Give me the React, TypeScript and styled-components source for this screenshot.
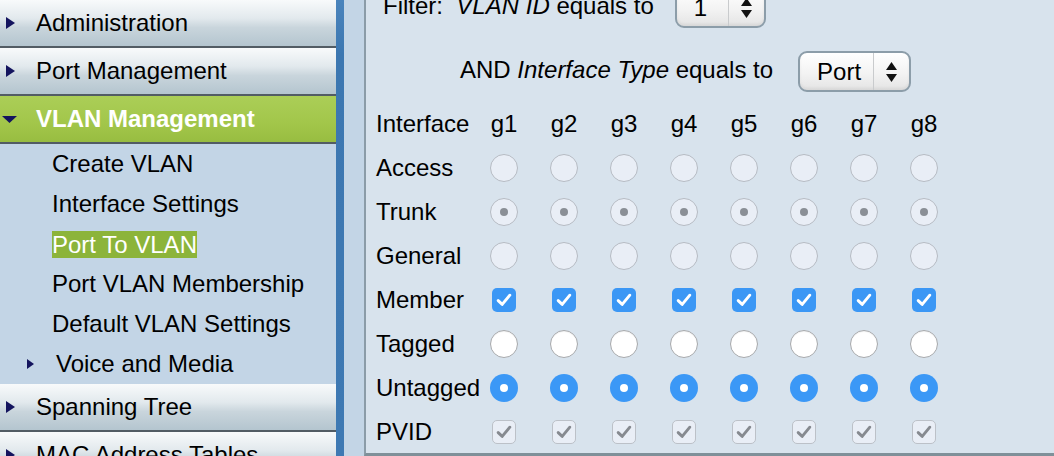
import React from 'react';
import styled, { createGlobalStyle } from 'styled-components';

const GlobalStyle = createGlobalStyle`
  html, body {
    margin: 0;
    padding: 0;
    overflow: hidden;
    background: #c3d5e6;
  }
  body {
    font-family: 'Liberation Sans', Arial, sans-serif;
    color: #000;
  }
`;

const Page = styled.div`
  display: flex;
  width: 1054px;
  height: 456px;
  overflow: hidden;
`;

const Sidebar = styled.nav`
  width: 336px;
  flex-shrink: 0;
  background: #c3d5e6;
  display: flex;
  flex-direction: column;
`;

const NavItem = styled.div<{ $active?: boolean }>`
  height: 46px;
  flex-shrink: 0;
  display: flex;
  align-items: center;
  border-bottom: 2px solid #525c64;
  font-size: 24px;
  font-weight: ${p => (p.$active ? 700 : 400)};
  color: ${p => (p.$active ? '#fff' : '#000')};
  background: ${p =>
    p.$active
      ? 'linear-gradient(#abce57, #a2c64a 60%, #98bd41)'
      : 'linear-gradient(#f8fafb 0%, #e2e9ed 40%, #c9d5dc 60%, #b4c5cf 100%)'};
`;

const ArrowSlot = styled.span<{ $open?: boolean }>`
  width: 36px;
  flex-shrink: 0;
  display: flex;
  align-items: center;
  padding-left: ${p => (p.$open ? '2px' : '6px')};
  box-sizing: border-box;
`;

const SubMenu = styled.div`
  display: flex;
  flex-direction: column;
  flex-shrink: 0;
  background: #c3d5e6;
`;

const SubItem = styled.div<{ $nested?: boolean }>`
  height: 40px;
  line-height: 40px;
  font-size: 24px;
  display: flex;
  align-items: center;
  padding-left: ${p => (p.$nested ? '27px' : '52px')};
`;

const SubArrow = styled.span`
  width: 29px;
  display: flex;
  align-items: center;
`;

const Current = styled.span`
  background: #8cb43a;
  color: #fff;
  line-height: 27px;
  display: inline-block;
`;

const BlueBar = styled.div`
  width: 8px;
  flex-shrink: 0;
  background: linear-gradient(#4a84bc, #3c77b1 12%, #3e79b3);
`;

const Gutter = styled.div`
  width: 20px;
  flex-shrink: 0;
  background: #c3d5e6;
`;

const Main = styled.main`
  flex: 1;
  box-sizing: border-box;
  height: 456px;
  background: #d8e3ed;
  border-left: 2px solid #8b9ca8;
  border-bottom: 3px solid #7f9099;
  overflow: hidden;
  font-size: 24px;
`;

const FilterRow = styled.div<{ $indent: number; $top: number }>`
  display: flex;
  align-items: center;
  height: 41px;
  margin-top: ${p => p.$top}px;
  padding-left: ${p => p.$indent}px;
  white-space: pre;
`;

const Label = styled.span<{ $gap: number }>`
  margin-right: ${p => p.$gap}px;
  padding-bottom: 4px;
`;

const Select = styled.div<{ $width: number }>`
  width: ${p => p.$width}px;
  height: 41px;
  box-sizing: border-box;
  border: 2px solid #8c9da9;
  border-radius: 9px;
  background: linear-gradient(#ffffff, #f3f3f3 55%, #e4e4e4);
  box-shadow: inset 0 -2px 3px rgba(0, 0, 0, 0.06);
  display: flex;
  align-items: stretch;
`;

const SelectValue = styled.span`
  flex: 1;
  display: flex;
  align-items: center;
  padding-left: 17px;
`;

const SelectArrows = styled.span`
  width: 35px;
  border-left: 1px solid #c9cbcd;
  display: flex;
  align-items: center;
  justify-content: center;
`;

const Grid = styled.div`
  display: grid;
  grid-template-columns: 98px repeat(8, 60px);
  grid-auto-rows: 44px;
  align-items: center;
  justify-items: center;
  margin: 10px 0 0 10px;
`;

const RowLabel = styled.span`
  justify-self: start;
  white-space: nowrap;
`;

const Radio = styled.span<{ $variant: 'disabled' | 'disabledOn' | 'off' | 'on' }>`
  width: 28px;
  height: 28px;
  box-sizing: border-box;
  border-radius: 50%;
  display: flex;
  align-items: center;
  justify-content: center;
  border: ${p =>
    p.$variant === 'on'
      ? 'none'
      : p.$variant === 'off'
      ? '1px solid #a7a9ac'
      : '1px solid #b6bbc3'};
  background: ${p =>
    p.$variant === 'on' ? '#3b98f6' : p.$variant === 'off' ? '#fff' : '#e9eef6'};
  box-shadow: ${p =>
    p.$variant === 'off' ? 'inset 0 1px 1px rgba(0,0,0,0.06)' : 'none'};

  &::after {
    content: '';
    display: ${p => (p.$variant === 'on' || p.$variant === 'disabledOn' ? 'block' : 'none')};
    width: 8px;
    height: 8px;
    border-radius: 50%;
    background: ${p => (p.$variant === 'on' ? '#fff' : '#8a8f96')};
  }
`;

const Check = styled.span<{ $disabled?: boolean }>`
  width: 24px;
  height: 24px;
  box-sizing: border-box;
  border-radius: 5px;
  display: flex;
  align-items: center;
  justify-content: center;
  background: ${p => (p.$disabled ? '#e9eef6' : '#3b97f5')};
  border: ${p => (p.$disabled ? '1px solid #bcc1c8' : 'none')};

  svg {
    display: block;
  }
`;

const RightArrow = ({ w = 9, h = 12 }: { w?: number; h?: number }) => (
  <svg width={w} height={h} viewBox={`0 0 ${w} ${h}`}>
    <path d={`M0 0 L${w} ${h / 2} L0 ${h} Z`} fill="#14145e" />
  </svg>
);

const DownArrow = () => (
  <svg width="15" height="7" viewBox="0 0 15 7">
    <path d="M0 0 L15 0 L7.5 7 Z" fill="#14145e" />
  </svg>
);

const UpDown = () => (
  <svg width="11" height="20" viewBox="0 0 11 20">
    <path d="M5.5 0 L11 8 L0 8 Z" fill="#111" />
    <path d="M0 12 L11 12 L5.5 20 Z" fill="#111" />
  </svg>
);

const Tick = ({ color }: { color: string }) => (
  <svg width="18" height="18" viewBox="0 0 18 18">
    <path
      d="M3.2 9.6 L7.2 13.4 L14.8 4.2"
      fill="none"
      stroke={color}
      strokeWidth="2.9"
      strokeLinecap="round"
      strokeLinejoin="round"
    />
  </svg>
);

const ports = ['g1', 'g2', 'g3', 'g4', 'g5', 'g6', 'g7', 'g8'];

type Cell = 'disabled' | 'disabledOn' | 'off' | 'on' | 'check' | 'checkDisabled';

const rows: { label: string; cell: Cell }[] = [
  { label: 'Access', cell: 'disabled' },
  { label: 'Trunk', cell: 'disabledOn' },
  { label: 'General', cell: 'disabled' },
  { label: 'Member', cell: 'check' },
  { label: 'Tagged', cell: 'off' },
  { label: 'Untagged', cell: 'on' },
  { label: 'PVID', cell: 'checkDisabled' },
];

const renderCell = (cell: Cell, key: string) => {
  if (cell === 'check') {
    return (
      <Check key={key}>
        <Tick color="#fff" />
      </Check>
    );
  }
  if (cell === 'checkDisabled') {
    return (
      <Check key={key} $disabled>
        <Tick color="#868a90" />
      </Check>
    );
  }
  return <Radio key={key} $variant={cell} />;
};

const App: React.FC = () => {
  return (
    <Page>
      <GlobalStyle />
      <Sidebar>
        <NavItem>
          <ArrowSlot>
            <RightArrow />
          </ArrowSlot>
          Administration
        </NavItem>
        <NavItem>
          <ArrowSlot>
            <RightArrow />
          </ArrowSlot>
          Port Management
        </NavItem>
        <NavItem $active>
          <ArrowSlot $open>
            <DownArrow />
          </ArrowSlot>
          VLAN Management
        </NavItem>
        <SubMenu>
          <SubItem>Create VLAN</SubItem>
          <SubItem>Interface Settings</SubItem>
          <SubItem>
            <Current>Port To VLAN</Current>
          </SubItem>
          <SubItem>Port VLAN Membership</SubItem>
          <SubItem>Default VLAN Settings</SubItem>
          <SubItem $nested>
            <SubArrow>
              <RightArrow w={7} h={10} />
            </SubArrow>
            Voice and Media
          </SubItem>
        </SubMenu>
        <NavItem>
          <ArrowSlot>
            <RightArrow />
          </ArrowSlot>
          Spanning Tree
        </NavItem>
        <NavItem>
          <ArrowSlot>
            <RightArrow />
          </ArrowSlot>
          MAC Address Tables
        </NavItem>
      </Sidebar>
      <BlueBar />
      <Gutter />
      <Main>
        <FilterRow $indent={17} $top={-13}>
          <Label $gap={21}>
            Filter:{'  '}<i>VLAN ID</i> equals to
          </Label>
          <Select $width={91}>
            <SelectValue>1</SelectValue>
            <SelectArrows>
              <UpDown />
            </SelectArrows>
          </Select>
        </FilterRow>
        <FilterRow $indent={94} $top={23}>
          <Label $gap={25}>
            AND <i>Interface Type</i> equals to
          </Label>
          <Select $width={113}>
            <SelectValue>Port</SelectValue>
            <SelectArrows>
              <UpDown />
            </SelectArrows>
          </Select>
        </FilterRow>
        <Grid>
          <RowLabel>Interface</RowLabel>
          {ports.map(p => (
            <span key={p}>{p}</span>
          ))}
          {rows.map(r => (
            <React.Fragment key={r.label}>
              <RowLabel>{r.label}</RowLabel>
              {ports.map(p => renderCell(r.cell, `${r.label}-${p}`))}
            </React.Fragment>
          ))}
        </Grid>
      </Main>
    </Page>
  );
};

export default App;
